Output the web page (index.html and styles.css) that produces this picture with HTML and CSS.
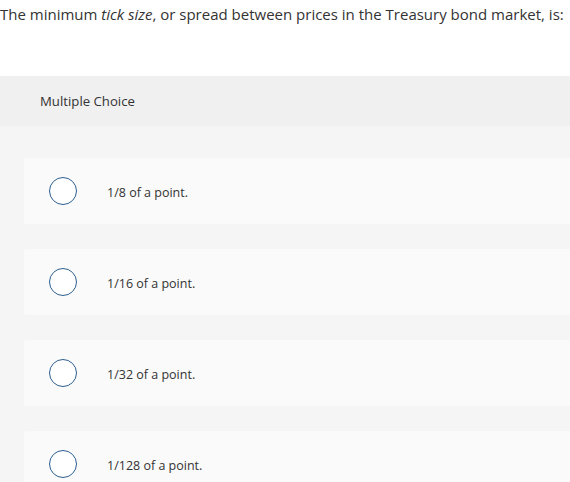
FILE: index.html
```html
<!DOCTYPE html>
<html>
<head>
<meta charset="utf-8">
<link rel="stylesheet" href="styles.css">
</head>
<body>
<p class="prompt">The minimum <em>tick size</em>, or spread between prices in the Treasury bond market, is:</p>
<div class="qtype">Multiple Choice</div>
<div class="choices">
  <div class="choice"><span class="radio"></span><span class="label">1/8 of a point.</span></div>
  <div class="choice"><span class="radio"></span><span class="label">1/16 of a point.</span></div>
  <div class="choice"><span class="radio"></span><span class="label">1/32 of a point.</span></div>
  <div class="choice"><span class="radio"></span><span class="label">1/128 of a point.</span></div>
</div>
</body>
</html>
```
FILE: styles.css
```css
html, body {
  margin: 0;
  padding: 0;
  background: #ffffff;
  overflow: hidden;
}
body {
  font-family: "Open Sans", "Liberation Sans", sans-serif;
  color: #333333;
  width: 570px;
  height: 482px;
}
.prompt {
  margin: 0;
  padding: 3px 0 0 0;
  font-size: 15px;
  line-height: 22px;
  height: 73px;
  white-space: nowrap;
}
.qtype {
  background: #f0f0f0;
  height: 50px;
  padding-left: 40px;
  font-size: 13.2px;
  display: flex;
  align-items: center;
}
.choices {
  background: #f5f5f5;
  padding: 32px 0 0 24px;
  display: flex;
  flex-direction: column;
  gap: 25px;
  height: 324px;
  overflow: hidden;
}
.choice {
  background: #fafafa;
  height: 66px;
  flex: none;
  border-radius: 3px 0 0 3px;
  display: flex;
  align-items: center;
  padding-left: 25px;
  margin-right: -10px;
}
.radio {
  box-sizing: border-box;
  width: 28px;
  height: 28px;
  border: 1.5px solid #2c5e8f;
  border-radius: 50%;
  background: #ffffff;
  flex: none;
}
.label {
  margin-left: 30px;
  font-size: 12.5px;
  color: #333333;
  padding-top: 3px;
}
```
